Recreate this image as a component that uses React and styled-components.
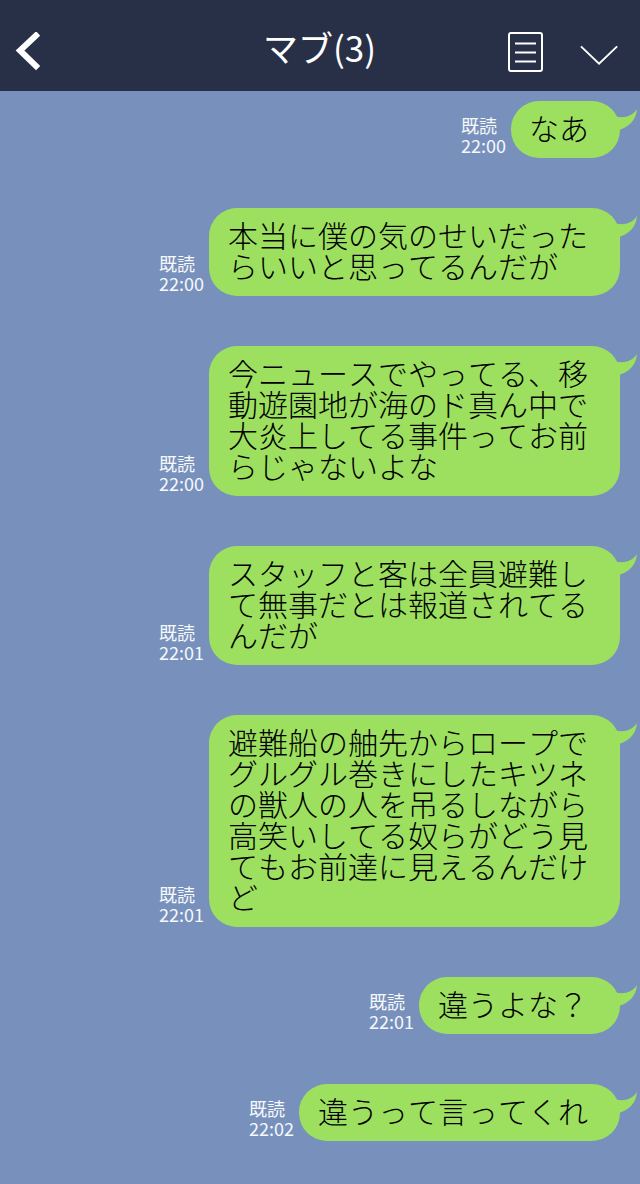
import React from "react";
import styled, { createGlobalStyle } from "styled-components";

const messages = [
  { text: "なあ", time: "22:00", short: true },
  { text: "本当に僕の気のせいだったらいいと思ってるんだが", time: "22:00" },
  { text: "今ニュースでやってる、移動遊園地が海のド真ん中で大炎上してる事件ってお前らじゃないよな", time: "22:00" },
  { text: "スタッフと客は全員避難して無事だとは報道されてるんだが", time: "22:01" },
  { text: "避難船の舳先からロープでグルグル巻きにしたキツネの獣人の人を吊るしながら高笑いしてる奴らがどう見てもお前達に見えるんだけど", time: "22:01" },
  { text: "違うよな？", time: "22:01" },
  { text: "違うって言ってくれ", time: "22:02" },
];

function App() {
  return (
    <Screen>
      <GlobalStyle />
      <Header>
        <BackIcon viewBox="0 0 26 42">
          <path d="M22 3.500 L6 18.500 L22 34" />
        </BackIcon>
        <Title>マブ(3)</Title>
        <HeaderIcons>
          <NoteIcon viewBox="0 0 36 42">
            <rect x="1" y="1" width="33" height="38" rx="2" />
            <path d="M7 11.500 H28 M7 20.500 H28 M7 29.500 H28" />
          </NoteIcon>
          <ChevronIcon viewBox="0 0 42 22">
            <path d="M1 2 L20 20 L39 2" />
          </ChevronIcon>
        </HeaderIcons>
      </Header>
      <Chat>
        {messages.map((message, index) => (
          <Row key={index}>
            <Meta>
              <span>既読</span>
              <span>{message.time}</span>
            </Meta>
            <Bubble $short={message.short}>
              {message.text}
              <Tail viewBox="0 0 30 30">
                <path d="M2 10 C10 14 21 13 27 4 C26 16 18 22 9 25 L0 25 Z" />
              </Tail>
            </Bubble>
          </Row>
        ))}
      </Chat>
    </Screen>
  );
}

const GlobalStyle = createGlobalStyle`
  html, body {
    margin: 0;
    padding: 0;
    background: #7891bc;
  }
`;

const Screen = styled.div`
  width: 640px;
  height: 1184px;
  overflow: hidden;
  background: #7891bc;
  font-family: "Noto Sans CJK JP", "Noto Sans", sans-serif;
  font-kerning: none;
`;

const Header = styled.header`
  display: flex;
  align-items: center;
  justify-content: space-between;
  height: 91px;
  padding: 14px 20px 0 14px;
  box-sizing: border-box;
  background: #283048;
  position: relative;
`;

const Title = styled.h1`
  position: absolute;
  left: 0;
  right: 0;
  top: 22px;
  margin: 0;
  padding-right: 1px;
  text-align: center;
  color: #fff;
  font-size: 35px;
  font-weight: 400;
  line-height: 50px;
`;

const BackIcon = styled.svg`
  width: 26px;
  height: 42px;
  fill: none;
  stroke: #fff;
  stroke-width: 6;
  stroke-linecap: square;
`;

const HeaderIcons = styled.div`
  display: flex;
  align-items: center;
  gap: 36px;
`;

const NoteIcon = styled.svg`
  width: 36px;
  height: 42px;
  fill: none;
  stroke: #fff;
  stroke-width: 2;
`;

const ChevronIcon = styled.svg`
  width: 40px;
  height: 22px;
  margin-top: 5px;
  fill: none;
  stroke: #fff;
  stroke-width: 2;
`;

const Chat = styled.main`
  display: flex;
  flex-direction: column;
  align-items: flex-end;
  gap: 50px;
  padding: 10px 20px 0 0;
`;

const Row = styled.div`
  display: flex;
  align-items: flex-end;
  gap: 5px;
`;

const Meta = styled.div`
  display: flex;
  flex-direction: column;
  color: #f6f8fb;
  font-size: 18px;
  line-height: 20px;
  padding-bottom: 3px;
`;

const Bubble = styled.div`
  position: relative;
  box-sizing: border-box;
  max-width: 411px;
  padding: 11px ${(props) => (props.$short ? "31px" : "32px")} 15px ${(props) => (props.$short ? "18px" : "19px")};
  border-radius: 28px;
  background: #9de05f;
  color: #000;
  font-size: 30px;
  font-weight: 300;
  line-height: 31px;
`;

const Tail = styled.svg`
  position: absolute;
  top: 4px;
  right: -20px;
  width: 30px;
  height: 30px;
  fill: #9de05f;
`;

export default App;
